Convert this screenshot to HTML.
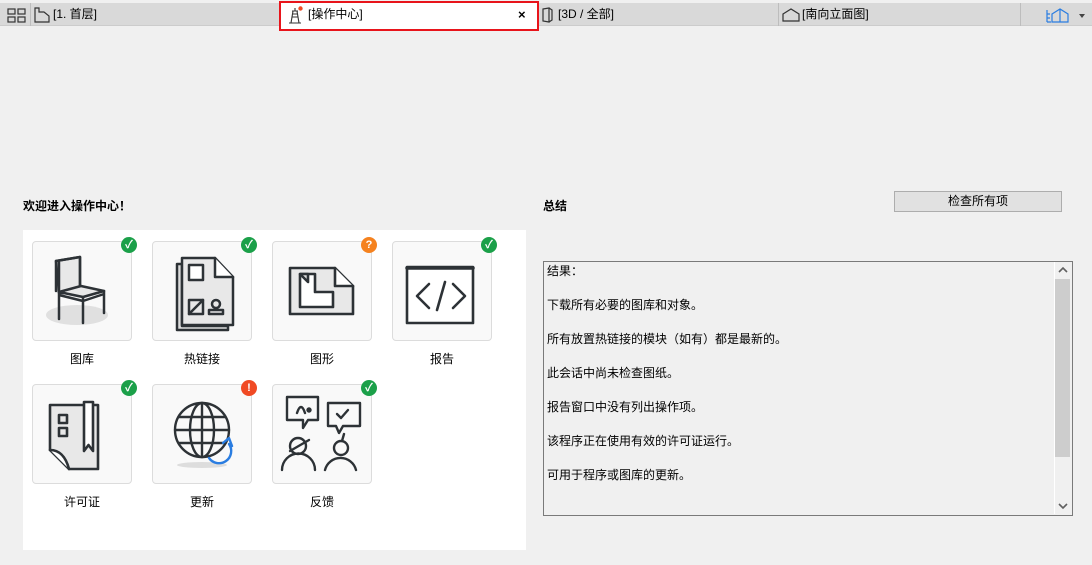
<!DOCTYPE html>
<html><head><meta charset="utf-8"><style>
*{margin:0;padding:0;box-sizing:border-box}
body{width:1092px;height:565px;background:#f0f0f0;font-family:"Liberation Sans","Noto Sans CJK SC",sans-serif;font-size:12px;color:#000;position:relative;overflow:hidden}
.abs{position:absolute}
.tabbar{left:0;top:3px;width:1092px;height:23px;background:#d9d9d9;border-bottom:1px solid #ccc}
.tab{position:absolute;top:3px;height:23px;line-height:23px;font-size:12px}
.sep{position:absolute;top:3px;width:1px;height:23px;background:#bdbdbd}
.tile{position:absolute;width:100px;height:100px;background:#f9f9f9;border:1.5px solid #dcdcdc;border-radius:4px}
.badge{position:absolute;width:16px;height:16px;border-radius:50%;color:#fff;font-size:11px;font-weight:bold;text-align:center;line-height:16px}
.lbl{position:absolute;width:100px;text-align:center;font-size:12px}
.res p{height:34px;line-height:16px;padding-left:3px}
svg.ic{stroke-linejoin:round;stroke-linecap:round}
</style></head><body>
<div class="abs tabbar"></div>
<svg class="abs" style="left:7px;top:8px" width="19" height="15" viewBox="0 0 19 15" fill="none" stroke="#333" stroke-width="1.2"><rect x="1" y="1" width="7" height="5"/><rect x="11" y="1" width="7" height="5"/><rect x="1" y="9" width="7" height="5"/><rect x="11" y="9" width="7" height="5"/></svg>
<div class="sep" style="left:30px"></div>
<svg class="abs" style="left:34px;top:7px" width="18" height="16" viewBox="0 0 18 16" fill="none" stroke="#333" stroke-width="1.2"><path d="M1 1h4v4h5l5 4v6H1z"/></svg>
<div class="tab" style="left:53px">[1. 首层]</div>
<div class="abs" style="left:279px;top:1px;width:260px;height:30px;border:2px solid #e8141b;background:#fff"></div>
<svg class="abs" style="left:285px;top:5px" width="20" height="20" viewBox="0 0 20 20" fill="none" stroke="#333" stroke-width="1.1"><path d="M4 18h12M6 18l2-12h4l2 12M7 12h6M8 9h4M10 6V3M7 6h6"/><circle cx="15.5" cy="3.5" r="2.2" fill="#f04a24" stroke="none"/></svg>
<div class="tab" style="left:308px;top:3px">[操作中心]</div>
<div class="tab" style="left:518px;top:3px;font-size:13px;font-weight:bold">×</div>
<svg class="abs" style="left:541px;top:7px" width="14" height="16" viewBox="0 0 14 16" fill="none" stroke="#333" stroke-width="1.2"><path d="M2 2l6-1v14l-6-1zM8 1l3 2v10l-3 2"/></svg>
<div class="tab" style="left:558px">[3D / 全部]</div>
<div class="sep" style="left:778px"></div>
<svg class="abs" style="left:782px;top:7px" width="18" height="16" viewBox="0 0 18 16" fill="none" stroke="#333" stroke-width="1.2"><path d="M1 7l8-5 8 5v7H1z"/></svg>
<div class="tab" style="left:802px">[南向立面图]</div>
<div class="sep" style="left:1020px"></div>
<svg class="abs" style="left:1044px;top:7px" width="46" height="16" viewBox="0 0 46 16" fill="none" stroke="#2a7de1" stroke-width="1.2"><path d="M3 3v12M3 7h3M3 11h3M3 15h4M8 7l8-5 8 5v8H8zM16 2v13"/><path d="M35 7l6 0-3 4z" fill="#444" stroke="none"/></svg>

<div class="abs" style="left:23px;top:197px;font-weight:bold">欢迎进入操作中心！</div>
<div class="abs" style="left:543px;top:197px;font-weight:bold">总结</div>
<div class="abs" style="left:894px;top:191px;width:168px;height:21px;border:1px solid #adadad;background:#e1e1e1;text-align:center;line-height:19px">检查所有项</div>

<div class="abs" style="left:23px;top:230px;width:503px;height:320px;background:#fff"></div>

<div class="tile" style="left:32px;top:241px"><svg class="ic" width="100" height="100" viewBox="0 0 100 100" fill="none" stroke="#2d3236" stroke-width="2.5"><ellipse cx="44" cy="73" rx="31" ry="10" fill="#e0e0e0" stroke="none"/><path d="M23 19l24-4v36H26z" fill="#e8e8e8"/><path d="M23 19v30M26 20v30M47 15v36M23 19l24-4"/><path d="M26 50l22-6 23 5-21 6z" fill="#e8e8e8"/><path d="M26 50v27M50 55v26M71 49v22M26 53l24 6 21-7"/></svg></div>
<div class="badge" style="left:121px;top:237px;background:#1ba049">✓</div>
<div class="lbl" style="left:32px;top:350px">图库</div>

<div class="tile" style="left:152px;top:241px"><svg class="ic" width="100" height="100" viewBox="0 0 100 100" fill="none" stroke="#2d3236" stroke-width="2.5"><path d="M24 22h5v62h46v4H24z" fill="#ddd"/><path d="M29 16h33l18 19v48H29z" fill="#e8e8e8"/><path d="M62 16v19h18" fill="#fff"/><rect x="36" y="23" width="14" height="15" fill="#fff"/><rect x="36" y="58" width="14" height="14"/><path d="M36 72l14-14"/><circle cx="63" cy="62" r="4"/><path d="M56 72h14v-4h-14z"/></svg></div>
<div class="badge" style="left:241px;top:237px;background:#1ba049">✓</div>
<div class="lbl" style="left:152px;top:350px">热链接</div>

<div class="tile" style="left:272px;top:241px"><svg class="ic" width="100" height="100" viewBox="0 0 100 100" fill="none" stroke="#2d3236" stroke-width="2.6"><path d="M17 26h45l18 18v28H17z" fill="#e8e8e8"/><path d="M62 26v18h18" fill="#fff"/><path d="M27 32h15v18h18v15H27z" fill="#fff"/><path d="M27 32h8v8z" fill="#ddd"/></svg></div>
<div class="badge" style="left:361px;top:237px;background:#f5821f">?</div>
<div class="lbl" style="left:272px;top:350px">图形</div>

<div class="tile" style="left:392px;top:241px"><svg class="ic" width="100" height="100" viewBox="0 0 100 100" fill="none" stroke="#2d3236" stroke-width="2.6"><rect x="14" y="25" width="66" height="56" fill="#fff"/><path d="M14 26h66" stroke-width="3.5"/><path d="M36 42l-12 12 12 12M60 42l12 12-12 12M52 40l-8 28"/></svg></div>
<div class="badge" style="left:481px;top:237px;background:#1ba049">✓</div>
<div class="lbl" style="left:392px;top:350px">报告</div>

<div class="tile" style="left:32px;top:384px"><svg class="ic" width="100" height="100" viewBox="0 0 100 100" fill="none" stroke="#2d3236" stroke-width="2.6"><path d="M17 20h48v64H36L17 65z" fill="#e8e8e8"/><path d="M17 65q14 0 19 19" fill="#fff"/><rect x="26" y="30" width="8" height="8"/><rect x="26" y="43" width="8" height="8"/><path d="M51 17h9v49l-4.5-6-4.5 6z" fill="#fff"/></svg></div>
<div class="badge" style="left:121px;top:380px;background:#1ba049">✓</div>
<div class="lbl" style="left:32px;top:493px">许可证</div>

<div class="tile" style="left:152px;top:384px"><svg class="ic" width="100" height="100" viewBox="0 0 100 100" fill="none" stroke="#2d3236" stroke-width="2.4"><ellipse cx="49" cy="80" rx="25" ry="3" fill="#ddd" stroke="none"/><circle cx="49" cy="45" r="27"/><ellipse cx="49" cy="45" rx="12" ry="27"/><path d="M22 45h54M26 32h46M26 58h46M49 18v54"/><path d="M56 73a12 12 0 0 0 20-14" stroke="#2a7de1"/><path d="M70 58l6-5 3 8" stroke="#2a7de1"/></svg></div>
<div class="badge" style="left:241px;top:380px;background:#f04a24">!</div>
<div class="lbl" style="left:152px;top:493px">更新</div>

<div class="tile" style="left:272px;top:384px"><svg class="ic" width="100" height="100" viewBox="0 0 100 100" fill="none" stroke="#2d3236" stroke-width="2.4"><path d="M14 12h31v23H35l-5 8v-8H14z"/><path d="M24 28q4-12 8 0"/><circle cx="36" cy="25" r="1.5" fill="#2d3236"/><path d="M55 18h32v23H70l-4 7-3-7h-8z"/><path d="M64 29l4 4 7-8"/><circle cx="25" cy="61" r="8"/><path d="M17 66l19-11"/><path d="M9 85a16 16 0 0 1 33 0"/><circle cx="68" cy="63" r="7"/><path d="M69 56l2-7"/><path d="M52 85a16 16 0 0 1 31 0"/></svg></div>
<div class="badge" style="left:361px;top:380px;background:#1ba049">✓</div>
<div class="lbl" style="left:272px;top:493px">反馈</div>

<div class="abs res" style="left:543px;top:261px;width:530px;height:255px;border:1px solid #7a7a7a;background:#f0f0f0;padding-top:1px">
<p>结果：</p><p>下载所有必要的图库和对象。</p><p>所有放置热链接的模块（如有）都是最新的。</p><p>此会话中尚未检查图纸。</p><p>报告窗口中没有列出操作项。</p><p>该程序正在使用有效的许可证运行。</p><p>可用于程序或图库的更新。</p>
</div>
<div class="abs" style="left:1054px;top:262px;width:17px;height:252px;border-left:1px solid #fff;background:#f0f0f0"></div>
<div class="abs" style="left:1055px;top:279px;width:15px;height:178px;background:#cdcdcd"></div>
<svg class="abs" style="left:1058px;top:266px" width="10" height="8" viewBox="0 0 10 8"><path d="M1 6l4-4 4 4" fill="none" stroke="#606060" stroke-width="1.6"/></svg>
<svg class="abs" style="left:1058px;top:502px" width="10" height="8" viewBox="0 0 10 8"><path d="M1 2l4 4 4-4" fill="none" stroke="#606060" stroke-width="1.6"/></svg>
</body></html>
